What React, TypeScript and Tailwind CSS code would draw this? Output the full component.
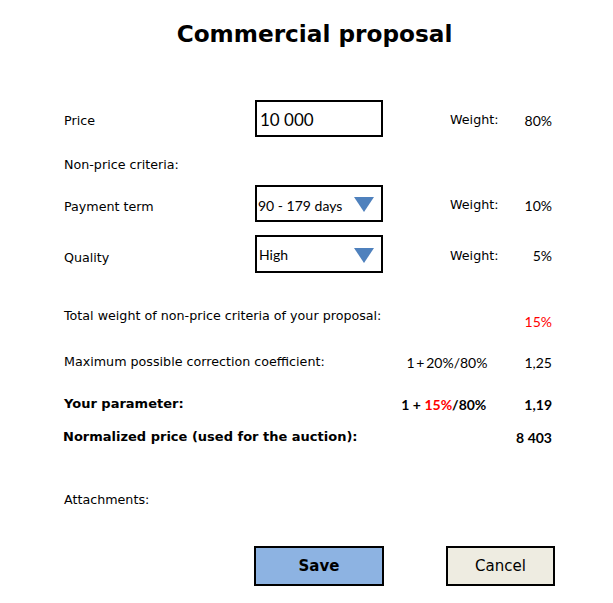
const label = "font-['DejaVu_Sans',sans-serif] text-[12.7px] text-black";
const bold = "font-['DejaVu_Sans',sans-serif] text-[13px] font-bold text-black";
const num = "font-['Lato','Liberation_Sans',sans-serif] text-[14px]";
const val = `${num} text-black`;

function Triangle() {
  return (
    <svg width="20" height="15" viewBox="0 0 20 15" className="shrink-0">
      <polygon points="0,0 20,0 10,15" fill="#4f81bd" />
    </svg>
  );
}

function WeightCell({ value }: { value: string }) {
  return (
    <div className="mt-[3px] flex flex-1 items-center">
      <span className={`${label} ml-[67px]`}>Weight:</span>
      <span className={`${val} ml-auto`}>{value}</span>
    </div>
  );
}

export default function App() {
  return (
    <div className="flex h-[603px] w-[613px] flex-col bg-white pl-[64px] pr-[61px]">
      <h1 className="mt-[19px] pl-[13px] text-center font-['DejaVu_Sans',sans-serif] text-[23.2px] font-bold leading-[30px] text-black">
        Commercial proposal
      </h1>

      <div className="mt-[51px] flex h-[37px] items-center">
        <span className={`${label} mt-[4px] w-[191px] shrink-0`}>Price</span>
        <div className="flex h-[37px] w-[128px] shrink-0 items-center border-2 border-black px-[3px]">
          <span className="mt-[2px] font-['Lato','Liberation_Sans',sans-serif] text-[17px] text-black">10 000</span>
        </div>
        <WeightCell value="80%" />
      </div>

      <div className={`${label} mt-[19px] leading-[18px]`}>Non-price criteria:</div>

      <div className="mt-[11px] flex h-[37px] items-center">
        <span className={`${label} mt-[7px] w-[191px] shrink-0`}>Payment term</span>
        <div className="flex h-[37px] w-[128px] shrink-0 items-center border-2 border-black pl-[1px] pr-[7px]">
          <span className={`${val} mt-[3px] text-[12.5px]`}>90 - 179 days</span>
          <span className="ml-auto mt-[2px]"><Triangle /></span>
        </div>
        <WeightCell value="10%" />
      </div>

      <div className="mt-[13px] flex h-[38px] items-center">
        <span className={`${label} mt-[7px] w-[191px] shrink-0`}>Quality</span>
        <div className="flex h-[38px] w-[128px] shrink-0 items-center border-2 border-black pl-[2px] pr-[7px]">
          <span className={`${val} mt-[1px] text-[12.5px]`}>High</span>
          <span className="ml-auto mt-[2px]"><Triangle /></span>
        </div>
        <WeightCell value="5%" />
      </div>

      <div className="mt-[37px] flex h-[24px] items-start">
        <span className={`${label} mt-[-3px] leading-[18px]`}>Total weight of non-price criteria of your proposal:</span>
        <span className={`${num} ml-auto mt-[3px] leading-[18px] text-[#ff0000]`}>15%</span>
      </div>

      <div className="mt-[16px] flex h-[24px] items-center">
        <span className={label}>Maximum possible correction coefficient:</span>
        <span className={`${val} ml-auto text-[12.5px]`}>1&#8201;+&#8201;20%/80%</span>
        <span className={`${val} ml-[37px]`}>1,25</span>
      </div>

      <div className="mt-[18px] flex h-[24px] items-center">
        <span className={bold}>Your parameter:</span>
        <span className={`${num} ml-auto font-bold text-black`}>
          1 + <span className="text-[#ff0000]">15%</span>/80%
        </span>
        <span className={`${val} ml-[38px] font-bold`}>1,19</span>
      </div>

      <div className="mt-[9px] flex h-[24px] items-center">
        <span className={`${bold} ml-[-1px]`}>Normalized price (used for the auction):</span>
        <span className={`${val} ml-auto font-bold`}>8 403</span>
      </div>

      <div className={`${label} mt-[42px] leading-[18px]`}>Attachments:</div>

      <div className="mt-[37px] flex">
        <button
          type="button"
          className="ml-[190px] flex h-[40px] w-[130px] shrink-0 items-center justify-center border-2 border-black bg-[#8db3e2] font-['DejaVu_Sans',sans-serif] text-[15px] font-bold text-black"
        >
          Save
        </button>
        <button
          type="button"
          className="ml-[62px] flex h-[40px] w-[109px] shrink-0 items-center justify-center border-2 border-black bg-[#eeece1] font-['DejaVu_Sans',sans-serif] text-[15px] text-black"
        >
          Cancel
        </button>
      </div>
    </div>
  );
}
